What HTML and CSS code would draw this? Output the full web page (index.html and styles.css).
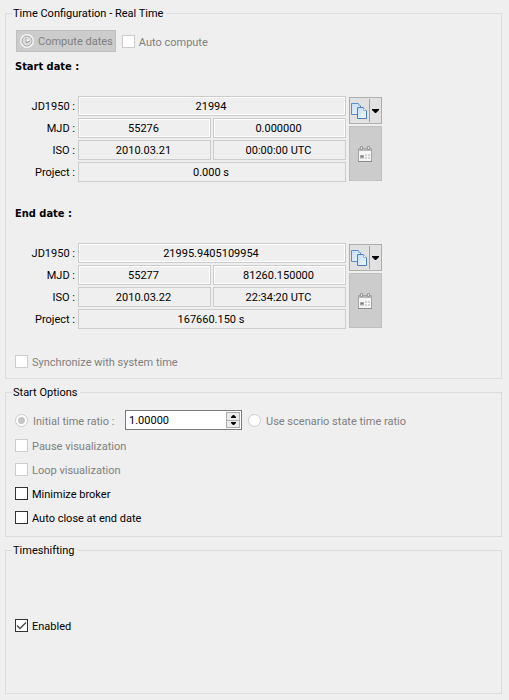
FILE: index.html
```html
<!DOCTYPE html>
<html lang="en">
<head>
<meta charset="utf-8">
<title>Time Configuration</title>
<link rel="stylesheet" href="styles.css">
</head>
<body>
<svg class="defs" aria-hidden="true">
  <defs>
    <linearGradient id="page" x1="0" y1="0" x2="1" y2="1">
      <stop offset="0" stop-color="#c4dcf8"/>
      <stop offset="1" stop-color="#f0f8ff"/>
    </linearGradient>
    <symbol id="copy" viewBox="0 0 16 16">
      <path d="M.5.5h7l2 2v9h-9z" fill="url(#page)" stroke="#5b8dcc"/>
      <path d="M7.500 .5v2h2" fill="#fff" stroke="#8db2e2"/>
      <path d="M6.500 4.500h6l3 3v8h-9z" fill="url(#page)" stroke="#4a7cc2"/>
      <path d="M12.500 4.500v3h3" fill="#fff" stroke="#8db2e2"/>
    </symbol>
    <symbol id="calendar" viewBox="0 0 14 16">
      <path d="M.5 2.500h13v13H.5z" fill="#f6f6f6" stroke="#a4a4a4"/>
      <path d="M1 3h12v2H1z" fill="#b8b8b8"/>
      <path d="M0 15.500h14" stroke="#8c8c8c"/>
      <path d="M2.500 .5h2v3h-2zM9.500 .5h2v3h-2z" fill="#e2e2e2" stroke="#9a9a9a"/>
      <path d="M6 8h6v5H2V9h4z" fill="#d2d2d2"/>
      <path d="M2 9h4v3H2z" fill="#a8a8a8"/>
      <path d="M3 10h2v1H3z" fill="#777"/>
      <path d="M6.500 8v5M9.500 8v5M6 10.500h6" stroke="#f6f6f6"/>
    </symbol>
  </defs>
</svg>
<main>
  <fieldset class="group">
    <legend>Time Configuration - Real Time</legend>
    <div class="toolbar">
      <button class="compute" type="button" disabled>
        <svg width="14" height="14" viewBox="0 0 14 14" aria-hidden="true">
          <circle cx="7" cy="7" r="6" fill="#dedede" stroke="#f5f5f5" stroke-width="2"/>
          <circle cx="7" cy="7" r="5" fill="none" stroke="#a5a5a5"/>
          <path d="M5 4l5 3-5 3z" fill="#fff"/>
          <path d="M6 4v5l4-2" fill="none" stroke="#8d8d8d"/>
        </svg>
        <span>Compute dates</span>
      </button>
      <label class="option off"><input type="checkbox" disabled>Auto compute</label>
    </div>

    <h2>Start date :</h2>
    <div class="dates">
      <label for="s-jd">JD1950 :</label>
      <input id="s-jd" class="field wide inset" value="21994" readonly>
      <label for="s-mjd">MJD :</label>
      <input id="s-mjd" class="field inset" value="55276" readonly>
      <input class="field inset" aria-label="Start MJD seconds" value="0.000000" readonly>
      <label for="s-iso">ISO :</label>
      <input id="s-iso" class="field" value="2010.03.21" readonly>
      <input class="field" aria-label="Start ISO time" value="00:00:00 UTC" readonly>
      <label for="s-project">Project :</label>
      <input id="s-project" class="field wide" value="0.000 s" readonly>
      <div class="side">
        <div class="split">
          <button class="copy" type="button" aria-label="Copy start date"><svg width="16" height="16"><use href="#copy"/></svg></button>
          <button class="more" type="button" aria-label="Copy options"><svg width="7" height="4" viewBox="0 0 7 4"><path d="M0 0h7v1L4 4H3L0 1z"/></svg></button>
        </div>
        <button class="pick" type="button" aria-label="Pick start date" disabled><svg width="14" height="16"><use href="#calendar"/></svg></button>
      </div>
    </div>

    <h2>End date :</h2>
    <div class="dates">
      <label for="e-jd">JD1950 :</label>
      <input id="e-jd" class="field wide inset" value="21995.9405109954" readonly>
      <label for="e-mjd">MJD :</label>
      <input id="e-mjd" class="field inset" value="55277" readonly>
      <input class="field inset" aria-label="End MJD seconds" value="81260.150000" readonly>
      <label for="e-iso">ISO :</label>
      <input id="e-iso" class="field" value="2010.03.22" readonly>
      <input class="field" aria-label="End ISO time" value="22:34:20 UTC" readonly>
      <label for="e-project">Project :</label>
      <input id="e-project" class="field wide" value="167660.150 s" readonly>
      <div class="side">
        <div class="split">
          <button class="copy" type="button" aria-label="Copy end date"><svg width="16" height="16"><use href="#copy"/></svg></button>
          <button class="more" type="button" aria-label="Copy options"><svg width="7" height="4" viewBox="0 0 7 4"><path d="M0 0h7v1L4 4H3L0 1z"/></svg></button>
        </div>
        <button class="pick" type="button" aria-label="Pick end date" disabled><svg width="14" height="16"><use href="#calendar"/></svg></button>
      </div>
    </div>
    <label class="option off sync"><input type="checkbox" disabled>Synchronize with system time</label>
  </fieldset>

  <fieldset class="group">
    <legend>Start Options</legend>
    <div class="ratio">
      <label class="option off initial"><input type="radio" name="ratio" checked disabled>Initial time ratio :</label>
      <div class="spin">
        <input type="text" aria-label="Time ratio" value="1.00000">
        <div class="steps">
          <button type="button" aria-label="Increase"><svg width="5" height="3" viewBox="0 0 5 3"><path d="M2 0h1l2 2v1H0V2z"/></svg></button>
          <button type="button" aria-label="Decrease"><svg width="5" height="3" viewBox="0 0 5 3"><path d="M0 0h5v1L3 3H2L0 1z"/></svg></button>
        </div>
      </div>
      <label class="option off"><input type="radio" name="ratio" disabled>Use scenario state time ratio</label>
    </div>
    <div class="list">
      <label class="option off"><input type="checkbox" disabled>Pause visualization</label>
      <label class="option off"><input type="checkbox" disabled>Loop visualization</label>
      <label class="option"><input type="checkbox">Minimize broker</label>
      <label class="option"><input type="checkbox">Auto close at end date</label>
    </div>
  </fieldset>

  <fieldset class="group">
    <legend>Timeshifting</legend>
    <div class="shift">
      <label class="option"><span class="tick"><input type="checkbox" checked><svg width="13" height="13" viewBox="0 0 13 13" aria-hidden="true"><path d="M2 6.500l3 3L11 3.500" fill="none" stroke="#444" stroke-width="1.300"/></svg></span>Enabled</label>
    </div>
  </fieldset>
</main>
</body>
</html>
```
FILE: styles.css
```css
* { box-sizing: border-box; }

body {
  margin: 0;
  background: #efefef;
  color: #000;
  font: 11px/14px Roboto, sans-serif;
}

input, button { margin: 0; font: inherit; color: inherit; }
svg { display: block; flex: none; }
.defs { position: absolute; width: 0; height: 0; }

main {
  display: flex;
  flex-direction: column;
  gap: 6px;
  padding: 6px 7px 6px 5px;
}

.group {
  min-width: 0;
  margin: 0;
  padding: 0 9px 10px;
  border: 1px solid #dcdcdc;
}
legend { margin-left: -3px; padding: 2px 3px 0 1px; line-height: 12px; }

.toolbar { display: flex; align-items: center; gap: 6px; padding: 10px 0 0 1px; }
.compute {
  display: flex;
  align-items: center;
  gap: 4px;
  height: 22px;
  padding: 0 2px 0 3px;
  border: 1px solid #bfbfbf;
  background: #ccc;
  color: #808080;
}
.compute span { padding-top: 2px; }

.option { display: flex; align-items: flex-start; gap: 4px; height: 13px; line-height: 15px; }
.off { color: #808080; }

input[type="checkbox"], input[type="radio"] {
  appearance: none;
  display: block;
  flex: none;
  width: 13px;
  height: 13px;
  border: 1px solid #333;
  background: #fff;
}
input[type="radio"] { border-radius: 50%; }
input[type]:disabled { border-color: #ccc; }
input[type="radio"]:checked {
  background: radial-gradient(circle, #c6c6c6 3px, #fff 4px);
}
.tick { display: grid; }
.tick > * { grid-area: 1 / 1; z-index: 1; }

h2 {
  margin: 8px 0 22px;
  font: bold 11px/14px "DejaVu Sans Condensed", "DejaVu Sans", sans-serif;
  font-stretch: condensed;
}

.dates {
  display: grid;
  grid-template-columns: 61px minmax(0, 133px) minmax(0, 133px) 33px;
  grid-auto-rows: 20px;
  gap: 2px;
  align-items: center;
  margin-bottom: 25px;
}
.dates label { grid-column: 1; padding: 2px 1px 0 0; text-align: right; }
.field {
  width: 100%;
  height: 20px;
  padding: 1px 4px 0 2px;
  border: 1px solid #ccc;
  background: #efefef;
  text-align: center;
}
.inset { box-shadow: inset 0 0 0 1px #fff; }
.wide { grid-column: 2 / span 2; }

.side {
  grid-column: 4;
  grid-row: 1 / span 4;
  display: flex;
  flex-direction: column;
  gap: 2px;
  align-self: stretch;
  padding: 1px 0;
  margin: 0 -1px 0 1px;
}
.split { display: flex; height: 27px; border: 1px solid #adadad; background: #e1e1e1; }
.split button {
  display: flex;
  align-items: center;
  justify-content: center;
  padding: 0;
  border: 0;
  background: none;
}
.split .copy { width: 20px; margin: 1px 0; padding-right: 1px; border-right: 1px solid #a0a0a0; }
.split .more { flex: 1; }
.pick {
  display: flex;
  flex: 1;
  align-items: center;
  justify-content: center;
  padding: 0 1px 0 0;
  border: 1px solid #bfbfbf;
  background: #ccc;
}
.sync { margin-top: 26px; }

.ratio { display: flex; align-items: center; gap: 6px; padding-top: 11px; }
.ratio .option { gap: 5px; }
.initial { width: 104px; }
.spin {
  display: flex;
  width: 117px;
  height: 20px;
  padding: 1px;
  border: 1px solid #7a7a7a;
  background: #fff;
}
.spin input { flex: 1; min-width: 0; padding: 2px 2px 0; border: 0; background: none; }
.steps { display: flex; flex-direction: column; width: 14px; border: 1px solid #adadad; }
.steps button {
  display: flex;
  flex: 1;
  align-items: center;
  justify-content: center;
  min-height: 0;
  padding: 0;
  border: 0;
  background: #ebebeb;
}
.steps button + button { border-top: 1px solid #adadad; }

.list { display: flex; flex-direction: column; gap: 11px; padding: 9px 0 2px; }
.shift { padding: 62px 0 51px; }
```
